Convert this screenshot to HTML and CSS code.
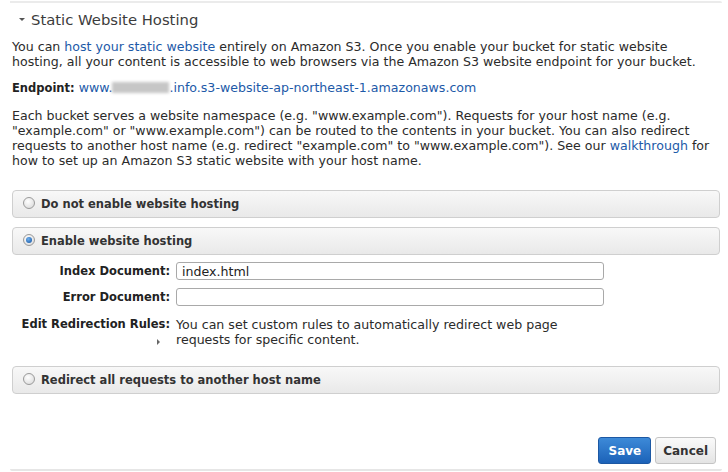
FILE: index.html
```html
<!DOCTYPE html>
<html>
<head>
  <title>Static Website Hosting</title>
  <link rel="stylesheet" href="styles.css">
</head>
<body>

<div class="rule"></div>

<div class="section">
  <h2 class="title"><span class="caret-down"></span>Static Website Hosting</h2>

  <p class="intro">You can <a href="#">host your static website</a> entirely on Amazon S3. Once you enable your bucket for static website hosting, all your content is accessible to web browsers via the Amazon S3 website endpoint for your bucket.</p>

  <p class="endpoint"><b>Endpoint:</b> <a href="#">www.<span class="blur"></span>.info.s3-website-ap-northeast-1.amazonaws.com</a></p>

  <p class="namespace">Each bucket serves a website namespace (e.g. "www.example.com"). Requests for your host name (e.g. "example.com" or "www.example.com") can be routed to the contents in your bucket. You can also redirect requests to another host name (e.g. redirect "example.com" to "www.example.com"). See our <a href="#">walkthrough</a> for how to set up an Amazon S3 static website with your host name.</p>

  <div class="option first">
    <span class="radio"></span>Do not enable website hosting
  </div>

  <div class="option">
    <span class="radio checked"></span>Enable website hosting
  </div>

  <div class="fields">
    <label class="field-label" for="idx">Index Document:</label>
    <input class="text" id="idx" type="text" value="index.html">

    <label class="field-label" for="err">Error Document:</label>
    <input class="text" id="err" type="text" value="">

    <div class="field-label redir-label">Edit Redirection Rules:<span class="caret-right"></span></div>
    <div class="redir-text">You can set custom rules to automatically redirect web page requests for specific content.</div>
  </div>

  <div class="option last">
    <span class="radio"></span>Redirect all requests to another host name
  </div>

  <div class="actions">
    <button class="btn primary" type="button">Save</button>
    <button class="btn" type="button">Cancel</button>
  </div>
</div>

<div class="rule bottom"></div>

</body>
</html>
```

FILE: styles.css
```css
body {
  margin: 0;
  font-family: "DejaVu Sans", Verdana, sans-serif;
  font-size: 12.6px;
  line-height: 15px;
  color: #2b2b2b;
  background: #fff;
}

a {
  color: #1d5aa8;
  text-decoration: none;
}

b {
  font-size: 11.5px;
}

.rule {
  margin: 1px 6px 0 10px;
  border-top: 2px solid #ebebeb;
  border-radius: 0 4px 0 0;
}

.rule.bottom {
  margin-top: 5px;
  border-top: 0;
  border-bottom: 2px solid #e6e6e6;
  border-radius: 0 0 4px 4px;
}

.section {
  padding: 0 8px 0 12px;
}

.title {
  margin: 7px 0 0 7px;
  font-size: 14.8px;
  line-height: 20px;
  font-weight: normal;
  color: #3c3c3c;
}

.caret-down {
  display: inline-block;
  width: 0;
  height: 0;
  margin: 0 6px 3px 0;
  vertical-align: middle;
  border-left: 3px solid transparent;
  border-right: 3px solid transparent;
  border-top: 3px solid #555;
}

.intro {
  margin: 9px 0 0;
}

.endpoint {
  margin: 11px 0 0;
}

.endpoint b {
  color: #222;
}

.blur {
  display: inline-block;
  width: 57px;
  height: 11px;
  vertical-align: -1px;
  background: #c6c6c6;
  filter: blur(1.5px);
}

.namespace {
  margin: 12px 0 0;
}

.option {
  margin-top: 9px;
  height: 26px;
  line-height: 26px;
  padding-left: 10px;
  border: 1px solid #cfcfcf;
  border-radius: 4px;
  background: linear-gradient(#f8f8f8, #e9e9e9);
  font-size: 11.5px;
  font-weight: bold;
  color: #333;
}

.option.first {
  margin-top: 22px;
}

.option.last {
  margin-top: 19px;
}

.radio {
  display: inline-block;
  width: 10px;
  height: 10px;
  margin-right: 6px;
  vertical-align: -1px;
  border: 1px solid #9a9a9a;
  border-radius: 50%;
  background: radial-gradient(circle at 40% 35%, #ffffff, #d6d6d6);
  position: relative;
}

.radio.checked::after {
  content: "";
  position: absolute;
  left: 2px;
  top: 2px;
  width: 6px;
  height: 6px;
  border-radius: 50%;
  background: radial-gradient(circle at 40% 35%, #6fb0ee, #0f4f9e);
}

.fields {
  display: grid;
  grid-template-columns: 158px 428px;
  column-gap: 6px;
  row-gap: 8px;
  margin-top: 7px;
  align-items: center;
}

.field-label {
  text-align: right;
  font-size: 11.5px;
  font-weight: bold;
  color: #222;
}

.text {
  height: 18px;
  box-sizing: border-box;
  margin: 0;
  padding: 0 5px;
  border: 1px solid #a9a9a9;
  border-radius: 3px;
  font-family: inherit;
  font-size: 12.6px;
  color: #222;
}

.redir-label {
  align-self: start;
  margin-top: 3px;
  position: relative;
  white-space: nowrap;
}

.caret-right {
  position: absolute;
  right: 10px;
  top: 22px;
  width: 0;
  height: 0;
  border-top: 3px solid transparent;
  border-bottom: 3px solid transparent;
  border-left: 3px solid #666;
}

.redir-text {
  margin-top: 3px;
  padding-right: 40px;
  align-self: start;
}

.actions {
  display: flex;
  justify-content: flex-end;
  gap: 4px;
  margin-top: 43px;
  padding-right: 4px;
}

.btn {
  height: 27px;
  padding: 0 7px;
  border: 1px solid #c4c4c4;
  border-radius: 3px;
  background: linear-gradient(#fafafa, #e4e4e4);
  font-family: inherit;
  font-size: 12px;
  font-weight: bold;
  color: #333;
}

.btn.primary {
  border-color: #1c58a3;
  background: linear-gradient(#3d8ad8, #1c62b8);
  color: #fff;
  padding: 0 9px;
}
```
